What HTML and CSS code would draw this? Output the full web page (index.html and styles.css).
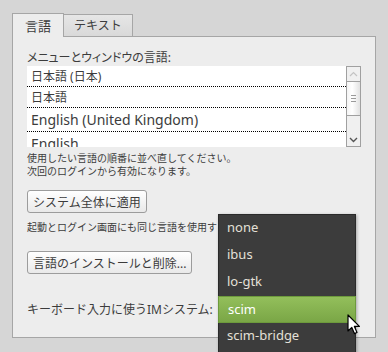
FILE: index.html
```html
<!DOCTYPE html>
<html lang="ja">
<head>
    <meta charset="UTF-8">
    <title>言語サポート</title>
    <link rel="stylesheet" href="styles.css">
</head>
<body>
<div class="tabs">
    <div class="tab active">言語</div>
    <div class="tab">テキスト</div>
</div>
<div class="panel">
    <div class="label label-lang">メニューとウィンドウの言語:</div>
    <div class="listbox">
        <div class="list">
            <div class="row">日本語 (日本)</div>
            <div class="row">日本語</div>
            <div class="row en">English (United Kingdom)</div>
            <div class="row en">English</div>
        </div>
        <div class="scrollbar">
            <div class="sb-up">
                <svg width="9" height="6" viewBox="0 0 9 6"><path d="M1 5 L4.5 1.5 L8 5" fill="none" stroke="#c4c4c4" stroke-width="1.2"/></svg>
            </div>
            <div class="sb-thumb">
                <span></span><span></span><span></span>
            </div>
            <div class="sb-track">
                <svg width="9" height="6" viewBox="0 0 9 6"><path d="M1 1 L4.5 4.5 L8 1" fill="none" stroke="#555" stroke-width="1.4"/></svg>
            </div>
        </div>
    </div>
    <div class="help">使用したい言語の順番に並べ直してください。<br>次回のログインから有効になります。</div>
    <button class="btn btn-apply">システム全体に適用</button>
    <div class="help help-one">起動とログイン画面にも同じ言語を使用す</div>
    <button class="btn btn-install">言語のインストールと削除...</button>
    <div class="label label-im">キーボード入力に使うIMシステム:</div>
</div>

<div class="menu">
    <div class="item">none</div>
    <div class="item">ibus</div>
    <div class="item">lo-gtk</div>
    <div class="item selected">scim</div>
    <div class="item">scim-bridge</div>
</div>

<svg class="cursor" width="14" height="22" viewBox="0 0 14 22">
    <path d="M1 1 L1 17 L4.8 13.4 L7.4 19.6 L10 18.5 L7.4 12.4 L12.4 12.4 Z" fill="#fff" stroke="#000" stroke-width="1.2" stroke-linejoin="round"/>
</svg>
</body>
</html>
```

FILE: styles.css
```css
body {
    margin: 0;
    padding: 13px 12px 0 12px;
    background: #d6d6d6;
    color: #3c3c3c;
    font-family: "Noto Sans", "Noto Sans CJK JP", sans-serif;
    font-size: 12px;
    height: 352px;
    box-sizing: border-box;
    overflow: hidden;
}

.tabs {
    display: flex;
    align-items: flex-end;
    height: 23px;
}

.tab {
    height: 22px;
    line-height: 22px;
    padding: 0 10px;
    border: 1px solid #a6a6a6;
    border-bottom: none;
    background: linear-gradient(#e6e6e6, #d9d9d9);
    font-size: 12px;
    box-sizing: border-box;
}

.tab.active {
    height: 24px;
    line-height: 24px;
    padding: 0 12px;
    background: #ededed;
    position: relative;
    z-index: 1;
    margin-bottom: -1px;
    font-size: 13px;
}

.tab + .tab {
    border-left: none;
}

.panel {
    background: #ededed;
    border: 1px solid #a6a6a6;
    height: 302px;
    box-sizing: border-box;
    padding: 13px 14px 0 14px;
    overflow: hidden;
}

.label {
    line-height: 15px;
    height: 15px;
}

.label-lang {
    font-feature-settings: "palt";
}

.listbox {
    display: flex;
    height: 81px;
    margin-top: 1px;
}

.list {
    flex: 1;
    background: #fff;
    overflow: hidden;
}

.row {
    height: 21px;
    line-height: 21px;
    padding-left: 4px;
    border-bottom: 1px dotted #000;
    box-sizing: border-box;
    white-space: nowrap;
}

.row.en {
    height: 24px;
    line-height: 24px;
    font-size: 14px;
}

.scrollbar {
    width: 15px;
    border: 1px solid #a0a0a0;
    box-sizing: border-box;
    display: flex;
    flex-direction: column;
    background: #f0f0f0;
}

.sb-up {
    height: 14px;
    display: flex;
    align-items: center;
    justify-content: center;
    border-bottom: 1px solid #a0a0a0;
}

.sb-thumb {
    height: 33px;
    border-bottom: 1px solid #a0a0a0;
    background: linear-gradient(90deg, #f4f4f4, #fff 40%, #e2e2e2);
    display: flex;
    flex-direction: column;
    align-items: center;
    justify-content: center;
    gap: 2px;
}

.sb-thumb span {
    width: 5px;
    height: 1px;
    background: #9a9a9a;
}

.sb-track {
    flex: 1;
    display: flex;
    align-items: flex-end;
    justify-content: center;
    padding-bottom: 3px;
}

.help {
    font-size: 10px;
    line-height: 13px;
    margin-top: 5px;
    white-space: nowrap;
}

.help-one {
    margin-top: 8px;
}

.btn {
    display: block;
    height: 23px;
    padding: 0 5px;
    border: 1px solid #9c9c9c;
    border-radius: 3px;
    background: linear-gradient(#ffffff, #e9e9e9);
    color: #3c3c3c;
    font-family: inherit;
    font-size: 12px;
}

.btn-apply {
    margin-top: 12px;
}

.btn-install {
    margin-top: 17px;
}

.label-im {
    margin-top: 28px;
}

.menu {
    position: absolute;
    left: 218px;
    top: 214px;
    width: 138px;
    height: 150px;
    background: #3c3c3c;
    border: 1px solid #2a2a2a;
    box-sizing: border-box;
    box-shadow: 1px 1px 3px rgba(0, 0, 0, 0.3);
    font-family: "Noto Sans", sans-serif;
    font-size: 13px;
}

.item {
    height: 27px;
    line-height: 25px;
    padding-left: 8px;
    color: #e4e0d8;
}

.item.selected {
    color: #fff;
    margin: 0 -1px;
    padding-left: 9px;
    border: 1px solid #6d9a3c;
    background: linear-gradient(#93bf5b, #7aa646);
    box-sizing: border-box;
    line-height: 24px;
}

.cursor {
    position: absolute;
    left: 347px;
    top: 314px;
}
```
